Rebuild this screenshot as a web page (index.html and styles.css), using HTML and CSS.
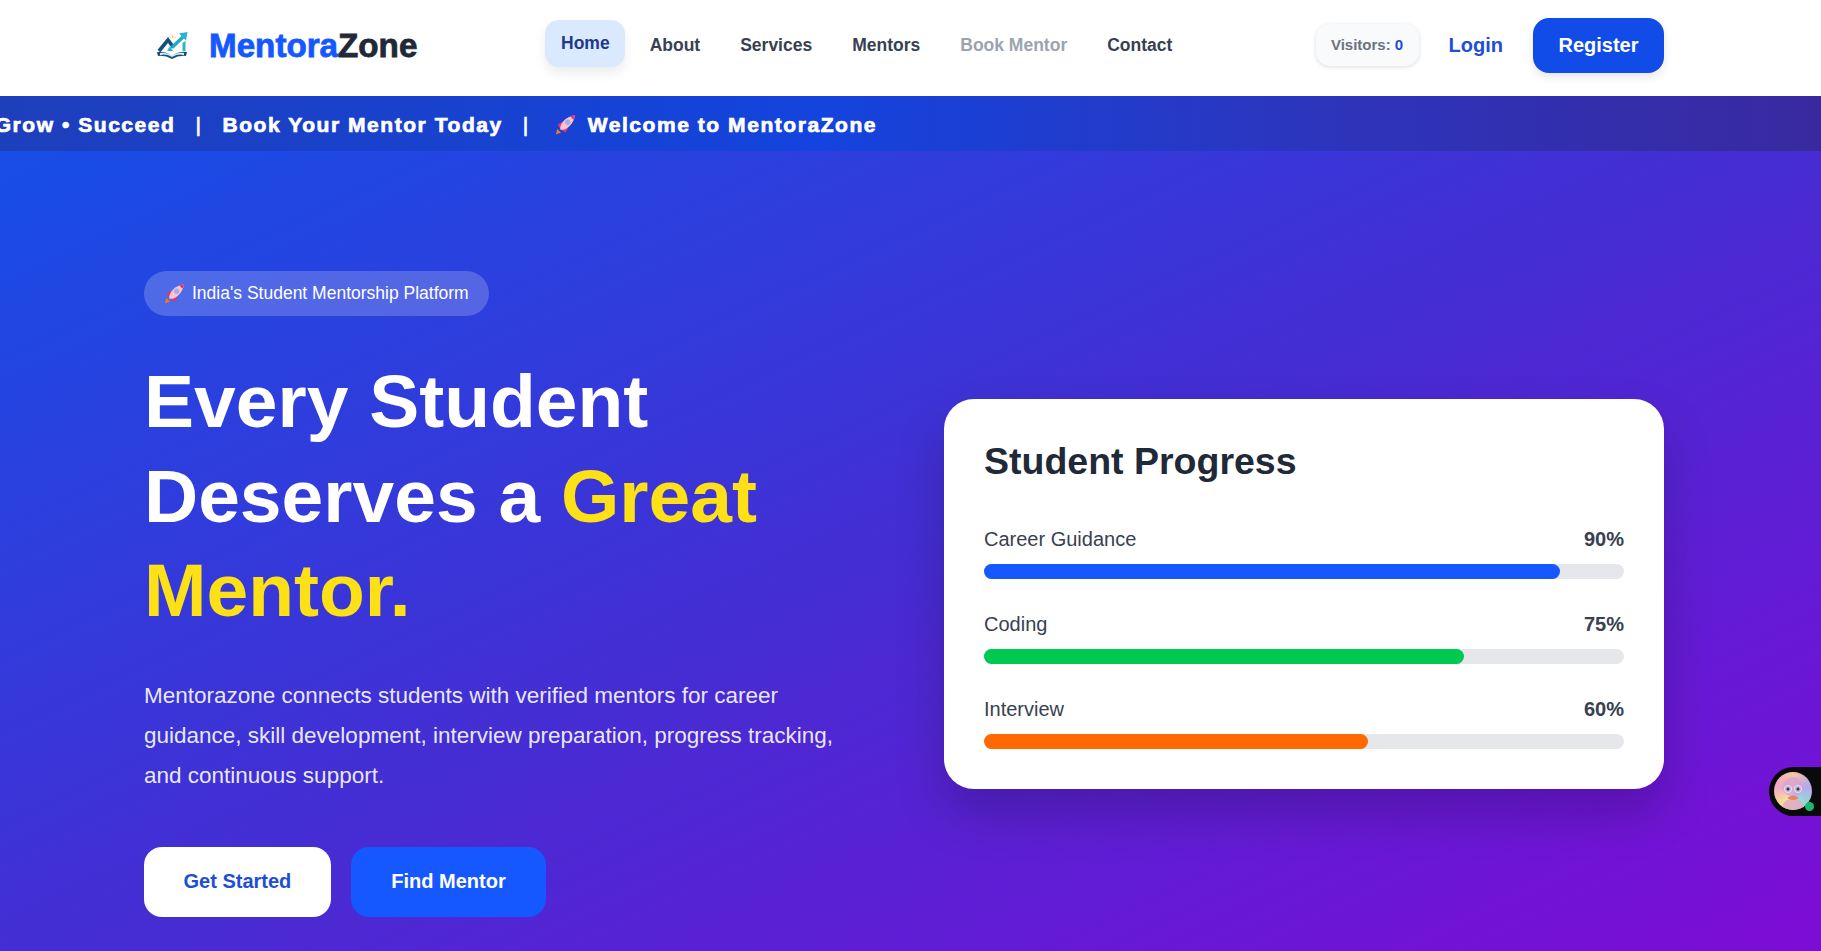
FILE: index.html
```html
<!DOCTYPE html>
<html lang="en">
<head>
    <meta charset="UTF-8">
    <meta name="viewport" content="width=device-width, initial-scale=1.0">
    <title>MentoraZone</title>
    <link rel="stylesheet" href="styles.css">
</head>
<body>
    <header class="navbar">
        <a class="logo" href="#">
            <svg class="logo-icon" viewBox="0 0 32 27">
                <path d="M1 20 Q9 19 16 24 Q23 19 31 20 L30 24 Q23 23 16 27 Q9 23 2 24 Z" fill="#14507e"/>
                <path d="M4 21 Q10 20 16 23.5 Q22 20 28 21 L28 23 Q22 21.5 16 25 Q10 21.5 4 23 Z" fill="#dff5f8"/>
                <path d="M3 19 L12 8 L17.5 15.5" fill="none" stroke="#14507e" stroke-width="3.6"/>
                <path d="M16 15.5 L27 5" fill="none" stroke="#1fa8d0" stroke-width="3.4"/>
                <path d="M23 1.5 L31.5 0 L30 8.5 Z" fill="#1fb7c9"/>
                <path d="M26.5 11 L29.5 9 L29.5 19 L26.5 19 Z" fill="#2bb8c6"/>
                <path d="M11 19 L14 14 L17 19 Z" fill="#2bb8c6"/>
                <path d="M16.7 2.5 L17.5 5 L16.7 6.5 L15.9 5 Z M13.5 4 L15 5.8 L14.5 6.5 Z M20 4 L18.5 5.8 L19 6.5 Z" fill="#f3c63a"/>
            </svg>
            <span class="logo-text"><span class="logo-blue">Mentora</span>Zone</span>
        </a>
        <nav class="nav-links">
            <a class="nav-link active" href="#">Home</a>
            <a class="nav-link" href="#">About</a>
            <a class="nav-link" href="#">Services</a>
            <a class="nav-link" href="#">Mentors</a>
            <a class="nav-link muted" href="#">Book Mentor</a>
            <a class="nav-link" href="#">Contact</a>
        </nav>
        <div class="nav-actions">
            <div class="visitors">Visitors: <span class="visitors-count">0</span></div>
            <a class="login" href="#">Login</a>
            <a class="register" href="#">Register</a>
        </div>
    </header>

    <main class="hero">
        <div class="ticker">
            <div class="ticker-track">
                <span>Learn &bull; Grow &bull; Succeed</span>
                <span class="ticker-sep">|</span>
                <span>Book Your Mentor Today</span>
                <span class="ticker-sep">|</span>
                <span class="ticker-item">
                    <svg class="rocket" viewBox="0 0 24 24">
                        <use href="#rocket-shape"/>
                    </svg>
                    Welcome to MentoraZone
                </span>
            </div>
        </div>

        <div class="hero-grid">
            <section class="hero-left">
                <div class="badge">
                    <svg class="rocket" viewBox="0 0 24 24">
                        <g id="rocket-shape">
                            <path d="M1 23 L2.5 17 L7 21.5 Z" fill="#f47a20"/>
                            <path d="M3 12 L9 8.5 L6 17 Z M12 21 L15.5 15 L7 18 Z" fill="#e8306e"/>
                            <path d="M6 18 C5 11 12 3 23 1 C21 12 13 19 6 18 Z" fill="#f7c4d0"/>
                            <path d="M17.5 2.8 C19.3 2 21.1 1.4 23 1 C22.6 3 22 4.9 21.2 6.7 Z" fill="#e8306e"/>
                            <circle cx="14.5" cy="9.5" r="2.8" fill="#8fb6e8" stroke="#c9a6c8" stroke-width="0.8"/>
                        </g>
                    </svg>
                    India's Student Mentorship Platform
                </div>
                <h1 class="hero-title">Every Student Deserves a <span class="highlight">Great Mentor.</span></h1>
                <p class="hero-text">Mentorazone connects students with verified mentors for career guidance, skill development, interview preparation, progress tracking, and continuous support.</p>
                <div class="hero-buttons">
                    <a class="btn btn-white" href="#">Get Started</a>
                    <a class="btn btn-blue" href="#">Find Mentor</a>
                </div>
            </section>

            <section class="progress-card">
                <h2>Student Progress</h2>
                <div class="progress-item">
                    <div class="progress-label"><span>Career Guidance</span><b>90%</b></div>
                    <div class="progress-bar"><div class="progress-fill fill-blue" style="width: 90%"></div></div>
                </div>
                <div class="progress-item">
                    <div class="progress-label"><span>Coding</span><b>75%</b></div>
                    <div class="progress-bar"><div class="progress-fill fill-green" style="width: 75%"></div></div>
                </div>
                <div class="progress-item">
                    <div class="progress-label"><span>Interview</span><b>60%</b></div>
                    <div class="progress-bar"><div class="progress-fill fill-orange" style="width: 60%"></div></div>
                </div>
            </section>
        </div>
    </main>

    <div class="chat-widget">
        <div class="chat-avatar">
            <svg viewBox="0 0 38 38">
                <path d="M8 38 C8 29 13 27 19 27 C25 27 30 29 30 38 Z" fill="#e8a6c0" fill-opacity="0.8"/>
                <circle cx="19" cy="15" r="10" fill="#d79fd8" fill-opacity="0.75"/>
                <path d="M13 26 Q19 21 25 26 Q19 30 13 26 Z" fill="#e8855f"/>
                <circle cx="14" cy="17" r="3.6" fill="#b9b4d8" stroke="#eef0f8" stroke-width="0.8"/>
                <circle cx="24" cy="17" r="3.6" fill="#b9b4d8" stroke="#eef0f8" stroke-width="0.8"/>
                <circle cx="14" cy="17" r="1.5" fill="#3b3350"/>
                <circle cx="24" cy="17" r="1.5" fill="#3b3350"/>
            </svg>
        </div>
        <span class="chat-dot"></span>
    </div>
</body>
</html>
```

FILE: styles.css
```css
* {
    box-sizing: border-box;
}
html, body {
    height: 100%;
}
body {
    margin: 0;
    display: flex;
    flex-direction: column;
    overflow: hidden;
    font-family: "Liberation Sans", Arial, sans-serif;
    color: #1f2937;
    background: #fff;
}
a {
    text-decoration: none;
}

/* navbar */
.navbar {
    height: 96px;
    flex-shrink: 0;
    display: flex;
    align-items: center;
    padding: 0 157px 6px 156px;
    background: #fff;
}
.logo {
    display: flex;
    align-items: center;
    gap: 21px;
    width: 389px;
}
.logo-icon {
    width: 32px;
    height: 27px;
}
.logo-text {
    margin-top: 2px;
    font-size: 33.2px;
    font-weight: bold;
    color: #1f2937;
    -webkit-text-stroke: 0.8px currentColor;
}
.logo-blue {
    color: #1558ff;
}
.nav-links {
    display: flex;
    gap: 8px;
}
.nav-link {
    padding: 13px 16px;
    border-radius: 14px;
    font-size: 17.5px;
    font-weight: bold;
    color: #374151;
}
.nav-link.active {
    padding: 13px 15px 13px 16px;
    margin-right: 1px;
    color: #1e3a8a;
    background: #dbe9fe;
    box-shadow: 0 6px 12px rgba(0,0,0,0.08);
    transform: translateY(-2px);
}
.nav-link.muted {
    color: #9ca3af;
}
.nav-actions {
    margin-left: auto;
    display: flex;
    align-items: center;
}
.visitors {
    width: 103px;
    height: 42px;
    display: flex;
    align-items: center;
    justify-content: center;
    padding-bottom: 1px;
    border-radius: 14px;
    background: #f9fafb;
    box-shadow: 0 1px 4px rgba(0,0,0,0.14);
    font-size: 15px;
    font-weight: bold;
    color: #6b7280;
    white-space: pre;
}
.visitors-count {
    color: #1d4ed8;
}
.login {
    margin: 0 30px;
    font-size: 20px;
    font-weight: bold;
    color: #1d4ed8;
}
.register {
    width: 131px;
    height: 55px;
    display: flex;
    align-items: center;
    justify-content: center;
    border-radius: 16px;
    background: #114ce8;
    box-shadow: 0 4px 10px rgba(0,0,0,0.1);
    font-size: 20px;
    font-weight: bold;
    color: #fff;
}

/* hero */
.hero {
    flex: 1;
    display: flex;
    flex-direction: column;
    background: linear-gradient(to bottom right, #1450e8 0%, #452dd3 52%, #7e0cd6 100%);
    color: #fff;
}
.ticker {
    height: 55px;
    flex-shrink: 0;
    display: flex;
    align-items: center;
    overflow: hidden;
    background: linear-gradient(90deg, #1e3fbc 0%, #1444de 45%, #2c35bd 72%, #39299f 100%);
}
.ticker-track {
    width: 877px;
    flex-shrink: 0;
    display: flex;
    align-items: center;
    justify-content: flex-end;
    gap: 20px;
    margin-top: 2px;
    white-space: nowrap;
    font-size: 21px;
    font-weight: bold;
    letter-spacing: 1.55px;
    -webkit-text-stroke: 0.7px #fff;
}
.ticker-sep {
    font-weight: normal;
}
.ticker-item {
    display: flex;
    align-items: center;
    gap: 12px;
    margin-left: 5px;
}
.rocket {
    width: 21px;
    height: 21px;
    flex-shrink: 0;
}
.hero-grid {
    display: grid;
    grid-template-columns: 720px 720px;
    gap: 80px;
    align-items: center;
    padding: 120px 0 0 144px;
}
.badge {
    display: inline-flex;
    align-items: center;
    gap: 7px;
    height: 45px;
    padding: 0 20px;
    border-radius: 23px;
    background: rgba(255,255,255,0.2);
    font-size: 17.5px;
}
.hero-title {
    margin: 38px 0 0;
    font-size: 75px;
    line-height: 94.5px;
    font-weight: bold;
}
.highlight {
    color: #fde016;
}
.hero-text {
    margin: 38px 0 0;
    max-width: 700px;
    font-size: 22.5px;
    line-height: 40px;
    color: rgba(255,255,255,0.9);
}
.hero-buttons {
    display: flex;
    gap: 20px;
    margin-top: 51px;
}
.btn {
    height: 70px;
    padding: 0 39.5px;
    display: flex;
    align-items: center;
    border-radius: 18px;
    font-size: 20px;
    font-weight: bold;
}
.btn-white {
    background: #fff;
    color: #1d4ed8;
}
.btn-blue {
    padding: 0 40.5px;
    background: #1558ff;
    color: #fff;
}

/* progress card */
.progress-card {
    padding: 40px;
    border-radius: 30px;
    background: #fff;
    box-shadow: 0 25px 50px rgba(0,0,0,0.2);
    color: #1f2937;
}
.progress-card h2 {
    margin: 0 0 44px;
    font-size: 37.5px;
    line-height: 44px;
}
.progress-item {
    margin-bottom: 33px;
}
.progress-item:last-child {
    margin-bottom: 0;
}
.progress-label {
    display: flex;
    justify-content: space-between;
    margin-bottom: 13px;
    font-size: 20px;
    line-height: 24px;
    color: #374151;
}
.progress-bar {
    height: 15px;
    border-radius: 8px;
    background: #e5e7eb;
}
.progress-fill {
    height: 100%;
    border-radius: 8px;
}
.fill-blue {
    background: #1558ff;
}
.fill-green {
    background: #00c950;
}
.fill-orange {
    background: #ff6900;
}

/* chat widget */
.chat-widget {
    position: fixed;
    right: 0;
    top: 767px;
    width: 52px;
    height: 49px;
    padding: 5px;
    border-radius: 25px 0 0 25px;
    background: #0a0a0a;
}
.chat-avatar {
    width: 38px;
    height: 38px;
    border-radius: 50%;
    overflow: hidden;
    background: conic-gradient(#f7c6a0, #b8a6f0, #8fe0d8, #f6e39a, #f2a6c8, #f7c6a0);
}
.chat-avatar svg {
    display: block;
}
.chat-dot {
    position: absolute;
    left: 36px;
    top: 35px;
    width: 9px;
    height: 9px;
    border-radius: 50%;
    background: #1fb86a;
}
```
